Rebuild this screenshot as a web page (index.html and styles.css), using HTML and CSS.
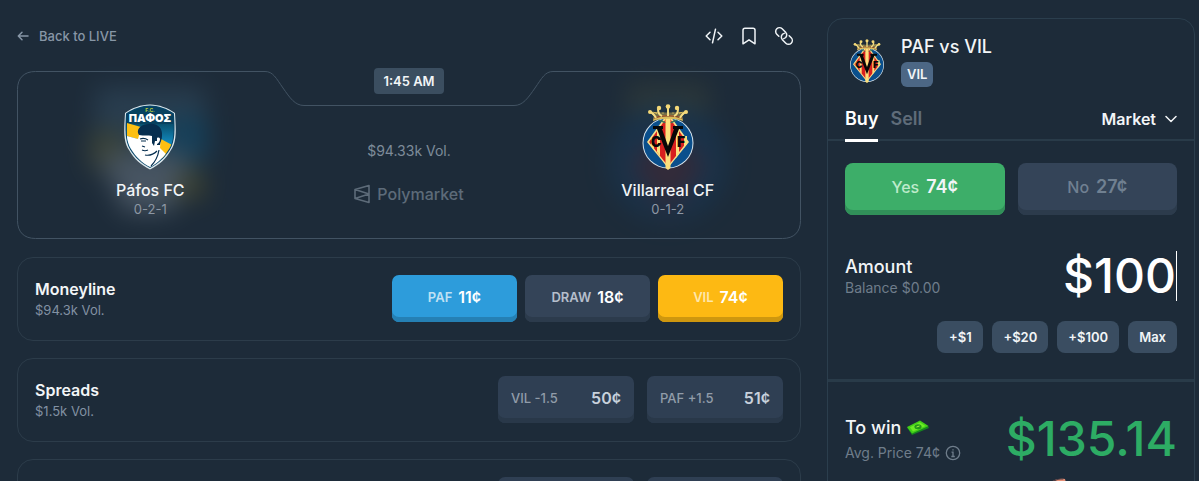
FILE: index.html
```html
<!DOCTYPE html>
<html lang="en">
<head>
<meta charset="utf-8">
<meta name="viewport" content="width=device-width, initial-scale=1">
<title>Páfos FC vs Villarreal CF</title>
<link rel="stylesheet" href="styles.css">
</head>
<body>
<svg class="defs" aria-hidden="true">
  <symbol id="crest-vil" viewBox="0 0 52 66">
    <circle cx="26" cy="39" r="25.5" fill="#d9e6ee"/>
    <circle cx="26" cy="39" r="24.5" fill="#0a4f8c"/>
    <path d="M26 9 47 38 26 64 5 38Z" fill="#fbe08a"/>
    <path d="M26 12 45 38 26 62 7 38Z" fill="#d8201f"/>
    <path d="M9 34h3v12l-3-4zM15 26h3v26l-3-4zM34 26h3v24l-3 4zM42 32h3v8l-3 4zM23.500 12h5V64L26 66l-2.500-2z" fill="#fce07c"/>
    <path d="M12 12 7 7c8 2 30 2 38 0l-5 5 1 5c-8-3-22-3-30 0z" fill="#d9bd5c"/>
    <path d="M10 8l5 2 2-5 4 5 5-7 5 7 4-5 2 5 5-2-4 5c-7-3-17-3-24 0z" fill="#1d2b39" opacity=".55"/>
    <path d="M12 14c8-3 20-3 28 0" fill="none" stroke="#8b4b2b" stroke-width="1.500"/>
    <path d="M8 8c3 1 5 4 6 6M16 5c0 3 1 6 4 7M26 3v9M36 5c0 3-1 6-4 7M44 8c-3 1-5 4-6 6" fill="none" stroke="#f4dd83" stroke-width="2"/>
    <g fill="#f4d978"><circle cx="8" cy="8" r="2"/><circle cx="17" cy="4" r="2.200"/><circle cx="26" cy="2.500" r="2.300"/><circle cx="35" cy="4" r="2.200"/><circle cx="44" cy="8" r="2"/></g>
    <path d="M17 16c3 2 5 1 6 3M35 16c-3 2-5 1-6 3" fill="none" stroke="#3c7655" stroke-width="1.500"/>
    <path d="M11 22h10v3h-1l6 17 6-17h-1v-3h10v3h-4L26 53 15 25h-4z" fill="#080808"/>
    <text x="14" y="43" class="crest-letter" text-anchor="middle">C</text>
    <text x="39" y="43" class="crest-letter" text-anchor="middle">F</text>
  </symbol>
</svg>

<div class="page">
  <main class="game">
    <header class="topbar">
      <a class="back" href="#live">
        <svg width="12" height="12" viewBox="0 0 12 12" fill="none" stroke="currentColor" stroke-width="1.500" stroke-linecap="round" stroke-linejoin="round"><path d="M11 6H1.500M5 2.300 1.300 6 5 9.700"/></svg>
        Back to LIVE
      </a>
      <div class="actions">
        <button type="button" aria-label="Embed"><svg width="18" height="18" viewBox="0 0 18 18"><path d="M5 5.200 1.200 9 5 12.800M13 5.200 16.800 9 13 12.800M10.500 2.200 7.500 15.800"/></svg></button>
        <button type="button" aria-label="Bookmark"><svg width="18" height="18" viewBox="0 0 18 18"><path d="M3 16.800V3.200C3 2 3.800 1.200 5 1.200h8c1.200 0 2 .8 2 2v13.600l-6-4z"/></svg></button>
        <button type="button" aria-label="Copy link"><svg width="18" height="18" viewBox="0 0 18 18"><g transform="rotate(45 9 9)"><path d="M5.500 12.800H2.600a3.800 3.800 0 0 1 0-7.600H7.500a3.800 3.800 0 0 1 3.200 5.800M12.500 5.200h2.900a3.800 3.800 0 0 1 0 7.600H10.500a3.800 3.800 0 0 1-3.200-5.800"/></g></svg></button>
      </div>
    </header>

    <section class="match">
      <svg class="outline" viewBox="0 0 784 168" preserveAspectRatio="none" aria-hidden="true"><path d="M.5 18.500C.5 7 7 .5 18.500 .5H248C256 .5 259 7 266 17 273 27 278 34.500 287 34.500H497C506 34.500 511 27 518 17 525 7 528 .5 536 .5H765.500C777 .5 783.500 7 783.500 18.500V149.500C783.500 161 777 167.500 765.500 167.500H18.500C7 167.500 .5 161 .5 149.500Z"/></svg>
      <div class="team">
        <div class="crest">
          <svg class="glow" viewBox="0 0 120 140" aria-hidden="true"><path d="M5 5h110v70H5z" fill="#3c5b72"/><path d="M0 50h36v38H0z" fill="#6f6929"/><path d="M76 34h42v46H76z" fill="#0a6390"/><path d="M8 72h94L82 130H34z" fill="#8d99a5"/><path d="M88 90h26v26H88z" fill="#7d7020"/></svg>
          <svg class="badge-art" viewBox="0 0 52 66" role="img" aria-label="Páfos FC crest">
            <defs>
              <clipPath id="shield"><path d="M26 3C18 3 10 6 3 11 2 27 2 37 7 45c5 8 11 14 19 18 8-4 14-10 19-18 5-8 5-18 4-34-7-5-15-8-23-8z"/></clipPath>
              <linearGradient id="sky" x2="0" y2="1"><stop stop-color="#08506f"/><stop offset="1" stop-color="#169cd7"/></linearGradient>
            </defs>
            <path d="M26 .5C17 .5 8 4 1 9 0 26-1 37 5 46c5 9 12 15 21 19.500 9-4.500 16-10.500 21-19.500 6-9 5-20 4-37C44 4 35 .5 26 .5z" fill="#dce8ed"/>
            <path d="M26 1.500C18 1.500 9 4.500 2 9.500 1 27 1 37 6 45.500c5 8.500 12 14 20 18.500 8-4.500 15-10 20-18.500 5-8.500 5-18.500 4-36-7-5-16-8-24-8z" fill="#064467"/>
            <g clip-path="url(#shield)">
              <path d="M0 20h52v25H0z" fill="url(#sky)"/>
              <path d="M0 0h52v20H0z" fill="#07415f"/>
              <path d="M3 19 17 23v13L3 32z" fill="#fdbf12"/>
              <path d="M37 35 50 42 40 57 34 46z" fill="#fdbf12"/>
              <path d="M3 32 14 35 16 28 37 31 36 44 42 50 33 66H20L3 44z" fill="#fff"/>
              <path d="M14 29c-1-5 4-9 11-9 8-1 14 4 13 12 0 4-2 6-2 9l-3 0 0-4-2 0-1 5-2-3 0-7c-4-1-8 0-13-1z" fill="#062e4f"/>
              <path d="M16 35c3-1 5-1 8 1M17 37l5 0M18 42l3 1M18 46c2 1 4 1 6 0M21 51c5 1 9-1 12-4M35 46c-1 6-3 11-8 16" fill="none" stroke="#062e4f" stroke-width="1.200"/>
              <path d="M33 34c4-2 4 4 0 6z" fill="#fff"/>
            </g>
            <text x="26" y="8" class="crest-fc" text-anchor="middle">F.C.</text>
            <text x="26" y="18" class="crest-name" text-anchor="middle">ΠΑΦΟΣ</text>
          </svg>
        </div>
        <h2>Páfos FC</h2>
        <p>0-2-1</p>
      </div>
      <div class="info">
        <time class="kickoff">1:45 AM</time>
        <p class="volume">$94.33k Vol.</p>
        <div class="brand">
          <svg width="16" height="20" viewBox="0 0 16 20" fill="none" stroke="currentColor" stroke-width="1.600" stroke-linejoin="round"><path d="M15 1.500v17L1 14.500v-9zM1 5.500 15 10 1 14.500"/></svg>
          Polymarket
        </div>
      </div>
      <div class="team">
        <div class="crest">
          <svg class="glow" viewBox="0 0 120 140" aria-hidden="true"><path d="M20 4h80v28H20z" fill="#4e5136"/><circle cx="60" cy="80" r="58" fill="#124069"/><path d="m60 50 40 32-40 50-40-50z" fill="#582a3a"/></svg>
          <svg class="badge-art" role="img" aria-label="Villarreal CF crest"><use href="#crest-vil"/></svg>
        </div>
        <h2>Villarreal CF</h2>
        <p>0-1-2</p>
      </div>
    </section>

    <section class="market">
      <div class="market-title"><h3>Moneyline</h3><p>$94.3k Vol.</p></div>
      <div class="odds">
        <button class="odd paf" type="button"><span>PAF</span><b>11¢</b></button>
        <button class="odd draw" type="button"><span>DRAW</span><b>18¢</b></button>
        <button class="odd vil" type="button"><span>VIL</span><b>74¢</b></button>
      </div>
    </section>
    <section class="market">
      <div class="market-title"><h3>Spreads</h3><p>$1.5k Vol.</p></div>
      <div class="odds lines">
        <button class="odd" type="button"><span>VIL -1.5</span><b>50¢</b></button>
        <button class="odd" type="button"><span>PAF +1.5</span><b>51¢</b></button>
      </div>
    </section>
    <section class="market">
      <div class="market-title"></div>
      <div class="odds lines">
        <button class="odd" type="button"></button>
        <button class="odd" type="button"></button>
      </div>
    </section>
  </main>

  <aside class="ticket">
    <header class="ticket-head">
      <svg class="mini-crest" role="img" aria-label="Villarreal CF crest"><use href="#crest-vil"/></svg>
      <div><h2>PAF vs VIL</h2><span class="pick">VIL</span></div>
    </header>
    <nav class="tabs">
      <button class="tab active" type="button">Buy</button>
      <button class="tab" type="button">Sell</button>
      <button class="order-type" type="button">Market
        <svg width="12" height="8" viewBox="0 0 12 8" fill="none" stroke="currentColor" stroke-width="1.500" stroke-linecap="round" stroke-linejoin="round"><path d="m1 1.500 5 5 5-5"/></svg>
      </button>
    </nav>
    <div class="order">
      <div class="sides">
        <button class="side yes" type="button"><span>Yes</span><b>74¢</b></button>
        <button class="side no" type="button"><span>No</span><b>27¢</b></button>
      </div>
      <div class="row amount">
        <div><label for="amount">Amount</label><p>Balance $0.00</p></div>
        <input id="amount" type="text" value="$100">
      </div>
      <div class="quick">
        <button type="button">+$1</button>
        <button type="button">+$20</button>
        <button type="button">+$100</button>
        <button type="button">Max</button>
      </div>
    </div>
    <div class="row payout">
      <div>
        <h3>To win
          <svg width="22" height="16" viewBox="0 0 22 16" aria-hidden="true"><path d="M0 7.500 5 15l17-7-1-2z" fill="#16851e"/><path d="M0 7 13 .5 21.500 6 5 13.500z" fill="#43cf18"/><path d="M3 7.200 12.600 2.200 18.500 6 6 11.500z" fill="#6ceb25"/><ellipse cx="11" cy="6.800" rx="3.600" ry="2.500" fill="#23971b"/><path d="m9.500 7 3-1" stroke="#a5f63d"/></svg>
        </h3>
        <p>Avg. Price 74¢
          <svg width="16" height="16" viewBox="0 0 16 16" fill="none" stroke="currentColor" stroke-width="1.300"><circle cx="8" cy="8" r="6.700"/><path d="M6.500 7.200H8v4.300M6.300 11.500h3.500M8 4.200v1.400"/></svg>
        </p>
      </div>
      <output for="amount">$135.14</output>
    </div>
    <svg class="avatar" width="20" height="12" viewBox="0 0 20 12" aria-hidden="true"><path d="M2 4C5 1 10 0 15 1l3 11H2z" fill="#e58f76"/><path d="M1 4C4 1 9 0 14 .5L13 1.500C8 1.500 5 2.500 3 5z" fill="#513e43"/></svg>
  </aside>
</div>
</body>
</html>
```

FILE: styles.css
```css
:root {
  --bg: #1d2b39;
  --line: #2c3c4a;
  --muted: #7e8b99;
  --text: #f2f5f7;
}
* { box-sizing: border-box; }
body {
  margin: 0;
  background: var(--bg);
  color: var(--text);
  font-family: Inter, "Liberation Sans", sans-serif;
  font-size: 14px;
  line-height: 18px;
}
h2, h3, p { margin: 0; }
button {
  padding: 0;
  border: 0;
  background: none;
  color: inherit;
  font: inherit;
}
.defs { display: none; }
.page {
  display: grid;
  grid-template-columns: minmax(0, 1fr) 368px;
  gap: 26px;
  height: 100vh;
  overflow: hidden;
  padding: 18px 4px 0 17px;
}

.game { display: flex; flex-direction: column; gap: 17px; }
.topbar { display: flex; align-items: center; justify-content: space-between; height: 36px; }
.back {
  display: flex;
  align-items: center;
  gap: 10px;
  color: #8796a6;
  font-size: 13px;
  font-weight: 500;
  text-decoration: none;
}
.actions { display: flex; gap: 17px; padding-right: 8px; }
.actions button, .actions svg { display: block; }
.actions svg { fill: none; stroke: #f0f4f7; stroke-width: 1.5; stroke-linecap: round; stroke-linejoin: round; overflow: visible; }

.match {
  position: relative;
  display: grid;
  grid-template-columns: 34% 1fr 34%;
  flex: none;
  min-height: 169px;
}
.outline { position: absolute; inset: 0; width: 100%; height: 168px; fill: none; stroke: #425363; }
.outline path { vector-effect: non-scaling-stroke; }
.team { display: flex; flex-direction: column; align-items: center; padding-top: 33px; text-align: center; }
.team h2 { position: relative; margin-top: 9px; font-size: 16px; font-weight: 500; line-height: 22px; }
.team p { position: relative; color: #8d97a4; font-size: 13px; line-height: 16px; }
.crest { position: relative; width: 52px; height: 66px; }
.badge-art { position: relative; display: block; width: 52px; height: 66px; }
.glow { position: absolute; top: -22px; left: -34px; width: 120px; height: 140px; filter: blur(13px); opacity: .38; overflow: visible; }
.crest-letter { font: 900 14px Inter, sans-serif; fill: #080808; }
.crest-fc { font: 700 5px Inter, sans-serif; fill: #b5ce39; }
.crest-name { font: 900 11px Inter, sans-serif; fill: #fff; }
.info { position: relative; display: flex; flex-direction: column; align-items: center; }
.kickoff {
  margin-top: -3px;
  padding: 4px 9px;
  border-radius: 4px;
  background: #3b4e60;
  font-size: 13px;
  font-weight: 600;
}
.volume { margin-top: 48px; color: var(--muted); }
.brand {
  display: flex;
  align-items: center;
  gap: 7px;
  margin-top: 22px;
  color: #5d6b79;
  font-size: 16px;
  font-weight: 500;
  line-height: 24px;
}

.market {
  display: flex;
  align-items: flex-start;
  justify-content: space-between;
  flex: none;
  min-height: 84px;
  padding: 17px;
  border: 1px solid var(--line);
  border-radius: 16px;
}
.market-title { padding-top: 3px; }
.market-title h3 { font-size: 16px; font-weight: 600; line-height: 22px; }
.market-title p { color: #8291a3; font-size: 13px; line-height: 20px; }
.odds { display: flex; gap: 8px; }
.odd {
  display: flex;
  align-items: center;
  justify-content: center;
  gap: 6px;
  width: 125px;
  height: 47px;
  padding-bottom: 3px;
  border-radius: 7px;
  background: #2f3f53;
  box-shadow: inset 0 -5px #293849;
}
.odd span { color: #919ca9; font-size: 13px; font-weight: 500; }
.odd b { color: #c8d1dc; font-size: 16px; font-weight: 600; }
.odd.paf { background: #2d9cdb; box-shadow: inset 0 -5px #2580b4; }
.odd.draw { background: #344458; box-shadow: inset 0 -5px #2c3b4c; }
.odd.vil { background: #fdb913; box-shadow: inset 0 -5px #ce970f; }
.odd.paf span { color: #bfe1f4; font-weight: 600; }
.odd.draw span { color: #b5becb; font-weight: 600; }
.odd.vil span { color: #fee7ac; font-weight: 600; }
.odd.paf b, .odd.draw b, .odd.vil b { color: #fff; }
.lines { gap: 13px; }
.lines .odd { justify-content: space-between; width: 136px; padding-right: 13px; padding-left: 13px; }

.ticket {
  align-self: start;
  border: 1px solid #2b3e4d;
  border-radius: 16px;
  min-height: 100vh;
}
.ticket-head { display: flex; align-items: center; gap: 12px; padding: 16px 17px 12px; }
.mini-crest { width: 44px; height: 44px; }
.ticket-head h2 { font-size: 18px; font-weight: 500; line-height: 24px; }
.pick {
  display: inline-block;
  margin-top: 3px;
  padding: 4px 6px;
  border-radius: 6px;
  background: #4c6785;
  font-size: 13px;
  font-weight: 600;
  line-height: 17px;
}
.tabs { display: flex; gap: 12px; height: 42px; padding: 0 17px; border-bottom: 2px solid #293b49; }
.tab { height: 43px; border-bottom: 3px solid transparent; color: #5f6c79; font-size: 18px; font-weight: 600; }
.tab.active { border-color: #fff; color: #fff; }
.order-type { display: flex; align-items: center; gap: 9px; margin-left: auto; font-size: 16px; font-weight: 600; }
.order { padding: 22px 17px 26px; border-bottom: 3px solid #293b49; }
.sides { display: grid; grid-template-columns: 1fr 1fr; gap: 13px; }
.side {
  display: flex;
  align-items: center;
  justify-content: center;
  gap: 7px;
  height: 52px;
  padding-bottom: 4px;
  border-radius: 8px;
}
.side span { font-size: 16px; font-weight: 500; }
.side b { font-size: 18px; font-weight: 600; }
.yes { background: #3dae69; box-shadow: inset 0 -5px #319059; }
.yes span { color: #bdebcb; }
.no { background: #344458; box-shadow: inset 0 -5px #2c3b4c; color: #708091; }
.row { display: flex; align-items: center; justify-content: space-between; }
.amount { margin-top: 36px; }
.row label, .row h3 { display: flex; align-items: center; gap: 6px; font-size: 18px; font-weight: 500; line-height: 24px; }
.row p { display: flex; align-items: center; gap: 5px; color: #6f7d8b; }
.row input {
  width: 180px;
  height: 50px;
  padding: 0;
  border: 0;
  border-right: 1px solid #fff;
  background: none;
  color: #fff;
  font: 500 48px/50px Inter, sans-serif;
  text-align: right;
}
.quick { display: flex; justify-content: flex-end; gap: 9px; margin-top: 20px; }
.quick button { min-width: 46px; height: 32px; padding: 0 11px; border-radius: 8px; background: #3a4d61; font-size: 13px; font-weight: 600; }
.payout { padding: 32px 17px 14px; }
.payout p { margin-top: 4px; }
.payout output { color: #2dac64; font-size: 48px; font-weight: 500; line-height: 50px; }
.avatar { display: block; margin-left: 222px; }
```
